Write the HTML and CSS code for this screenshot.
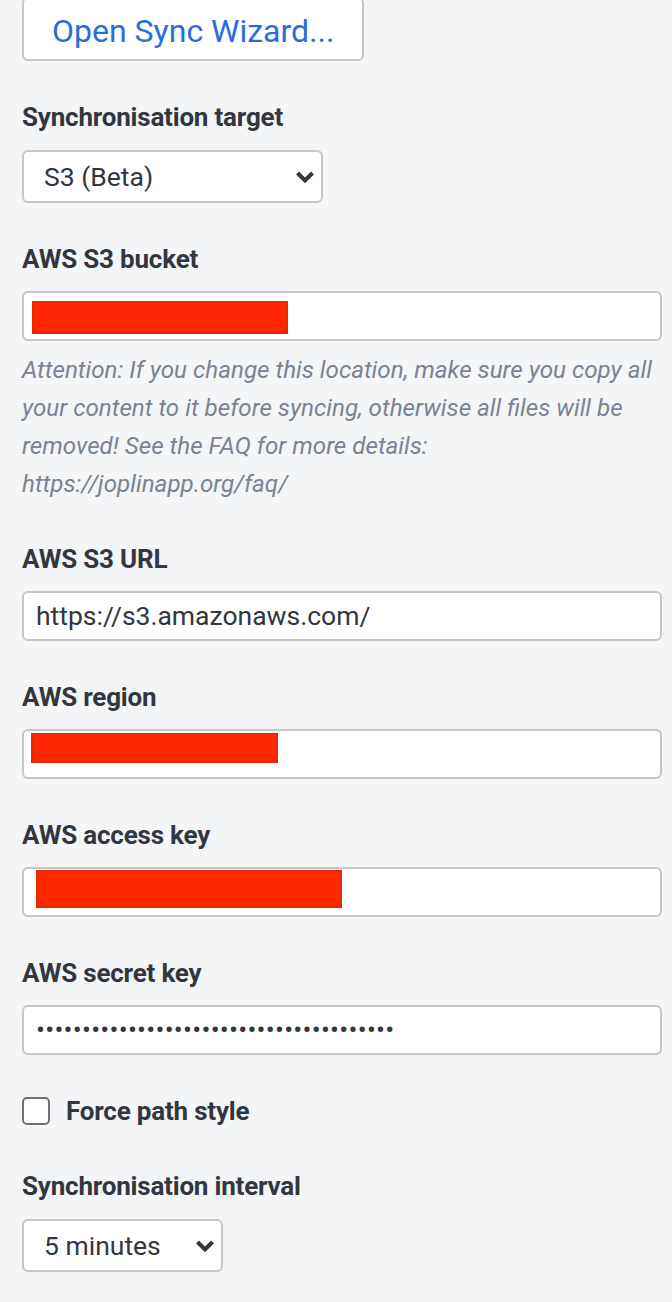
FILE: index.html
```html
<!DOCTYPE html>
<html lang="en">
<head>
<meta charset="utf-8">
<title>Sync settings</title>
<link rel="stylesheet" href="styles.css">
</head>
<body>
<div class="settings">
  <div class="section">
    <button class="wizard-btn" type="button">Open Sync Wizard...</button>
  </div>

  <div class="section">
    <div class="label">Synchronisation target</div>
    <div class="select select-target">
      <span>S3 (Beta)</span>
      <svg class="chevron" width="20" height="14" viewBox="0 0 20 14"><path d="M2.5 3 L10 10.5 L17.5 3" fill="none" stroke="#32373f" stroke-width="4"/></svg>
    </div>
  </div>

  <div class="section">
    <div class="label">AWS S3 bucket</div>
    <div class="textbox"><span class="redact redact-bucket"></span></div>
    <div class="help">Attention: If you change this location, make sure you copy all your content to it before syncing, otherwise all files will be removed! See the FAQ for more details: https://joplinapp.org/faq/</div>
  </div>

  <div class="section">
    <div class="label">AWS S3 URL</div>
    <div class="textbox"><span class="value">https://s3.amazonaws.com/</span></div>
  </div>

  <div class="section">
    <div class="label">AWS region</div>
    <div class="textbox"><span class="redact redact-region"></span></div>
  </div>

  <div class="section">
    <div class="label">AWS access key</div>
    <div class="textbox"><span class="redact redact-key"></span></div>
  </div>

  <div class="section">
    <div class="label">AWS secret key</div>
    <div class="textbox"><span class="value dots">&#8226;&#8226;&#8226;&#8226;&#8226;&#8226;&#8226;&#8226;&#8226;&#8226;&#8226;&#8226;&#8226;&#8226;&#8226;&#8226;&#8226;&#8226;&#8226;&#8226;&#8226;&#8226;&#8226;&#8226;&#8226;&#8226;&#8226;&#8226;&#8226;&#8226;&#8226;&#8226;&#8226;&#8226;&#8226;&#8226;&#8226;&#8226;&#8226;</span></div>
  </div>

  <div class="section check-section">
    <label class="check-row">
      <span class="checkbox"></span>
      <span class="check-label">Force path style</span>
    </label>
  </div>

  <div class="section">
    <div class="label">Synchronisation interval</div>
    <div class="select select-interval">
      <span>5 minutes</span>
      <svg class="chevron" width="20" height="14" viewBox="0 0 20 14"><path d="M2.5 3 L10 10.5 L17.5 3" fill="none" stroke="#32373f" stroke-width="4"/></svg>
    </div>
  </div>
</div>
</body>
</html>
```

FILE: styles.css
```css
html, body {
  margin: 0;
  padding: 0;
  background: #f4f5f6;
}

body {
  font-family: Roboto, "Liberation Sans", Arial, sans-serif;
  color: #32373f;
}

.settings {
  display: flex;
  flex-direction: column;
  gap: 40px;
  padding: 0 10px 0 22px;
  margin-top: -3px;
}

.section {
  display: flex;
  flex-direction: column;
  align-items: flex-start;
}

.wizard-btn {
  box-sizing: border-box;
  height: 64px;
  padding: 3px 28px 0;
  background: #ffffff;
  border: 2px solid #c5c6c8;
  border-radius: 6px;
  font-family: Roboto, "Liberation Sans", Arial, sans-serif;
  font-size: 32px;
  color: #2b6de0;
}

.label {
  font-size: 26px;
  font-weight: 700;
  letter-spacing: -0.2px;
  line-height: 32px;
  margin-bottom: 16px;
}

.select {
  box-sizing: border-box;
  height: 53px;
  margin-top: 1px;
  display: flex;
  align-items: center;
  justify-content: space-between;
  padding: 0 6px 0 20px;
  background: #ffffff;
  border: 2px solid #c5c6c8;
  border-radius: 6px;
  font-size: 26.5px;
}

.select-target { width: 301px; }
.select-interval { width: 201px; }

.chevron { display: block; }

.textbox {
  box-sizing: border-box;
  width: 640px;
  height: 50px;
  display: flex;
  align-items: center;
  padding: 0 12px;
  background: #ffffff;
  border: 2px solid #c5c6c8;
  border-radius: 6px;
  font-size: 26.5px;
}

.textbox .value { line-height: 30px; }

.dots { letter-spacing: 0.25px; }

.redact {
  box-sizing: border-box;
  display: block;
  align-self: flex-start;
  background: #ff2600;
  border: 2px solid #e42a00;
}

.redact-bucket { width: 256px; height: 33px; margin: 8px 0 0 -4px; }
.redact-region { width: 247px; height: 30px; margin: 2px 0 0 -5px; }
.redact-key { width: 306px; height: 38px; margin: 1px 0 0 0; }

.help {
  margin-top: 10px;
  font-size: 24.2px;
  font-style: italic;
  line-height: 38px;
  color: #7b8392;
}

.check-row {
  display: flex;
  align-items: center;
  gap: 16px;
  height: 32px;
}

.checkbox {
  box-sizing: border-box;
  width: 28px;
  height: 28px;
  background: #ffffff;
  border: 2px solid #6e7178;
  border-radius: 5px;
}

.check-label {
  font-size: 26px;
  font-weight: 700;
  letter-spacing: -0.2px;
}

.check-section { margin-bottom: 3px; }
```
